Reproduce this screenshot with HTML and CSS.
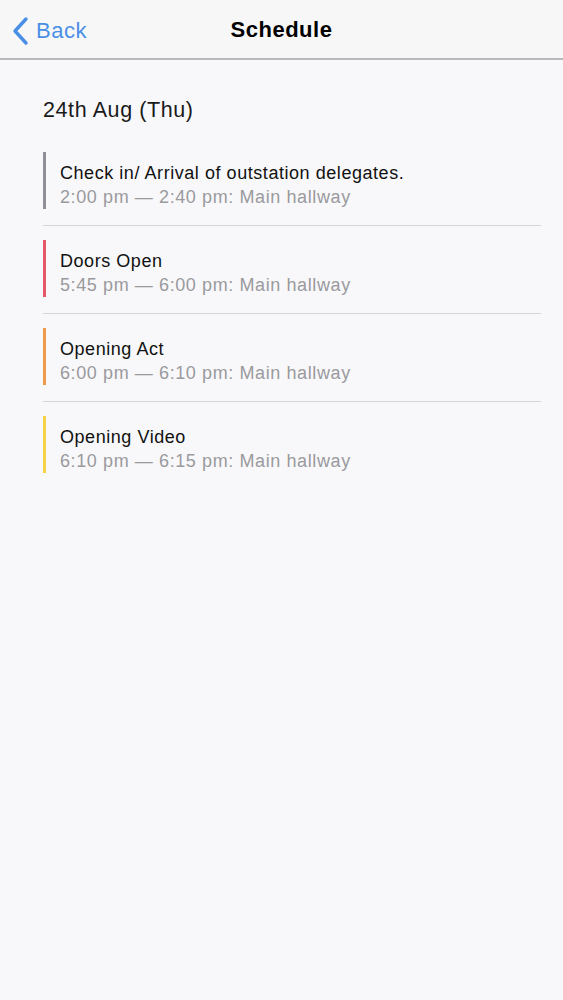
FILE: index.html
```html
<!DOCTYPE html>
<html>
<head lang="en">
    <meta charset="UTF-8">
    <title>Schedule</title>
    <meta name="viewport" content="width=device-width, initial-scale=1.0"/>
    <link rel="stylesheet" href="styles.css">
</head>
<body>
<div class="navbar">
    <a class="back" href="#">
        <svg class="chevron" width="18" height="30" viewBox="0 0 18 30">
            <path d="M15 3 L4 15 L15 27" fill="none" stroke="#4a8fe6" stroke-width="3.4" stroke-linecap="round" stroke-linejoin="round"/>
        </svg>
        <span>Back</span>
    </a>
    <div class="title">Schedule</div>
</div>

<div class="content">
    <div class="day">24th Aug (Thu)</div>
    <ul class="events">
        <li class="event">
            <div class="bar gray"></div>
            <div class="info">
                <div class="name">Check in/ Arrival of outstation delegates.</div>
                <div class="time">2:00 pm — 2:40 pm: Main hallway</div>
            </div>
        </li>
        <li class="event">
            <div class="bar red"></div>
            <div class="info">
                <div class="name">Doors Open</div>
                <div class="time">5:45 pm — 6:00 pm: Main hallway</div>
            </div>
        </li>
        <li class="event">
            <div class="bar orange"></div>
            <div class="info">
                <div class="name">Opening Act</div>
                <div class="time">6:00 pm — 6:10 pm: Main hallway</div>
            </div>
        </li>
        <li class="event last">
            <div class="bar yellow"></div>
            <div class="info">
                <div class="name">Opening Video</div>
                <div class="time">6:10 pm — 6:15 pm: Main hallway</div>
            </div>
        </li>
    </ul>
</div>
</body>
</html>
```

FILE: styles.css
```css
html, body {
    margin: 0;
    padding: 0;
    height: 100%;
    background-color: #f8f8fa;
    font-family: "Liberation Sans", Arial, sans-serif;
}

.navbar {
    position: relative;
    height: 60px;
    padding-top: 2px;
    box-sizing: border-box;
    background-color: #f7f7f8;
    border-bottom: 2px solid #b9b9bb;
    display: flex;
    align-items: center;
    justify-content: center;
}

.back {
    position: absolute;
    left: 11px;
    top: 16px;
    display: flex;
    align-items: center;
    gap: 7px;
    text-decoration: none;
    color: #4a8fe6;
    font-size: 22px;
    letter-spacing: 0.5px;
}

.chevron {
    display: block;
}

.title {
    font-size: 22px;
    font-weight: bold;
    letter-spacing: 0.5px;
    color: #000000;
}

.content {
    padding: 0 22px 0 43px;
}

.day {
    margin-top: 37px;
    font-size: 21.5px;
    letter-spacing: 0.6px;
    color: #1a1a1a;
    line-height: 26px;
}

.events {
    list-style: none;
    margin: 27px 0 0 0;
    padding: 0;
}

.event {
    display: flex;
    gap: 14px;
    padding: 2px 0 16px 0;
    margin-bottom: 12px;
    border-bottom: 1px solid #d6d6da;
}

.event.last {
    border-bottom: none;
}

.bar {
    width: 3px;
    height: 57px;
    flex: none;
}

.gray { background-color: #8e9096; }
.red { background-color: #e4586a; }
.orange { background-color: #ee9a4b; }
.yellow { background-color: #f5d44a; }

.info {
    padding-top: 9px;
}

.name {
    font-size: 18px;
    letter-spacing: 0.55px;
    color: #111111;
    line-height: 24px;
}

.time {
    font-size: 18px;
    letter-spacing: 0.6px;
    color: #9a9a9e;
    line-height: 24px;
}
```
